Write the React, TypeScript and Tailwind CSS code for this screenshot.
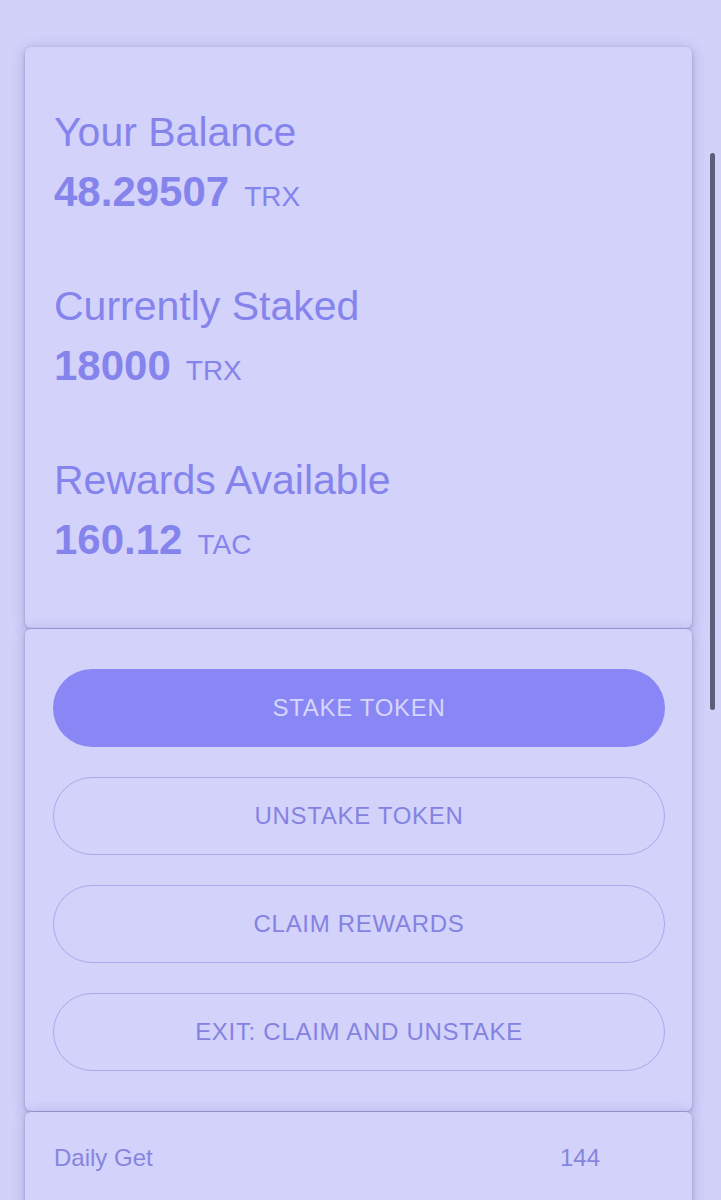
import React from "react";

const stats = [
  { label: "Your Balance", value: "48.29507", unit: "TRX" },
  { label: "Currently Staked", value: "18000", unit: "TRX" },
  { label: "Rewards Available", value: "160.12", unit: "TAC" },
];

const actions = ["UNSTAKE TOKEN", "CLAIM REWARDS", "EXIT: CLAIM AND UNSTAKE"];

function Card({ children, className = "" }: { children: React.ReactNode; className?: string }) {
  return (
    <div
      className={
        "rounded-[6px] bg-[#d3d2fb] shadow-[0_1px_3px_rgba(60,60,140,0.3),0_2px_14px_rgba(60,60,140,0.28)] " +
        className
      }
    >
      {children}
    </div>
  );
}

export default function App() {
  return (
    <div
      className="relative min-h-[1200px] overflow-hidden bg-[#d2d1fa] pl-[25px] pr-[29px] pt-[47px]"
      style={{ fontFamily: '"Liberation Sans", Arial, sans-serif' }}
    >
      <div className="flex flex-col gap-[1px]">
        {/* balances */}
        <Card className="flex flex-col gap-[66px] px-[29px] pb-[64px] pt-[61px] text-[#8584ed]">
          {stats.map((s) => (
            <div key={s.label} className="flex flex-col gap-3">
              <div className="text-[41px] leading-[48px]">{s.label}</div>
              <div className="flex items-baseline">
                <span className="text-[42px] font-bold leading-[48px]">{s.value}</span>
                <span className="ml-[15px] text-[28px] leading-[32px]">{s.unit}</span>
              </div>
            </div>
          ))}
        </Card>

        {/* actions */}
        <Card className="flex flex-col gap-[30px] pb-[40px] pl-[28px] pr-[27px] pt-[40px]">
          <button className="h-[78px] w-full rounded-full bg-[#8887f5] text-[24px] tracking-[0.7px] text-[#d6d5fc]">
            STAKE TOKEN
          </button>
          {actions.map((a) => (
            <button
              key={a}
              className="h-[78px] w-full rounded-full border border-[#aaa8ec] text-[24px] tracking-[0.7px] text-[#8483e2]"
            >
              {a}
            </button>
          ))}
        </Card>

        {/* info */}
        <Card className="min-h-[140px] pl-[29px] pr-[92px] pt-[30px]">
          <div className="flex justify-between text-[24px] leading-[32px] text-[#8685de]">
            <span>Daily Get</span>
            <span>144</span>
          </div>
        </Card>
      </div>

      {/* scroll indicator */}
      <div className="absolute left-[710px] top-[153px] h-[557px] w-[5px] rounded-full bg-[#5f5e78]" />
    </div>
  );
}
